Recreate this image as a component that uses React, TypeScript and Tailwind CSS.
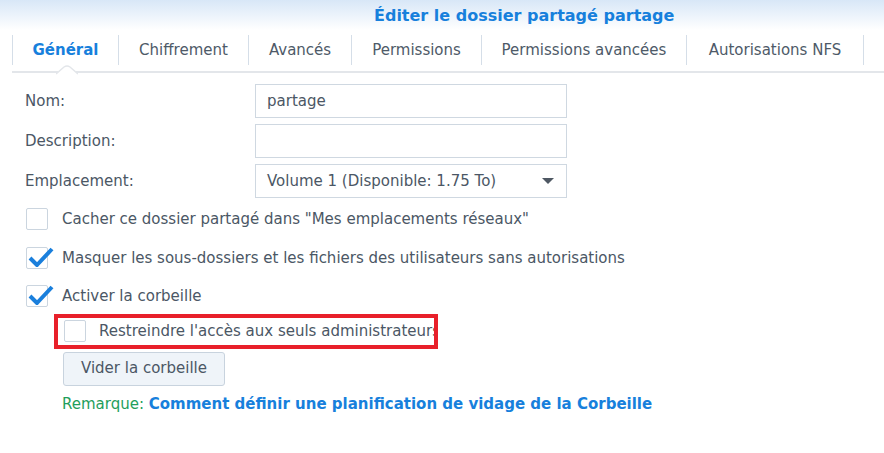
import React from 'react';

const tabs = [
  { label: 'Général', w: 'w-[106px]', active: true },
  { label: 'Chiffrement', w: 'w-[130px]' },
  { label: 'Avancés', w: 'w-[103px]' },
  { label: 'Permissions', w: 'w-[130px]' },
  { label: 'Permissions avancées', w: 'w-[205px]' },
  { label: 'Autorisations NFS', w: 'w-[177px]' },
];

const Check = ({ checked = false }: { checked?: boolean }) => (
  <div className="relative w-[22px] h-[22px] shrink-0 border border-[#cbd5df] bg-white rounded-[2px]">
    {checked && (
      <svg className="absolute left-[1px] top-[-3px]" width="26" height="24" viewBox="0 0 26 24">
        <path d="M2 13 L9 20 L24 4" fill="none" stroke="#1a7fdc" strokeWidth="4" strokeLinejoin="round" />
      </svg>
    )}
  </div>
);

const FieldRow = ({ label, children }: { label: string; children: React.ReactNode }) => (
  <div className="flex items-center h-[34px]">
    <div className="w-[255px] pl-[25px] text-[15px] text-[#4b5765]">{label}</div>
    <div className="w-[312px] h-[34px] border border-[#cfd8e1] bg-white flex items-center px-[11px] text-[15px] text-[#4b5765]">
      {children}
    </div>
  </div>
);

const TabBar = () => (
  <div className="relative ml-[12px] mt-[5px]">
    <div className="flex h-[30px] border-l border-[#d5dee8]">
      {tabs.map((t) => (
        <div
          key={t.label}
          className={`${t.w} border-r border-[#d5dee8] flex items-center justify-center text-[15px] ${
            t.active ? 'font-bold text-[#1780dc]' : 'text-[#4e5a68]'
          }`}
        >
          {t.label}
        </div>
      ))}
    </div>
    <div className="h-[8px] border-b-2 border-[#e3e6ea]" />
    {/* notch under the active tab */}
    <svg className="absolute left-[44px] top-[30px]" width="22" height="10" viewBox="0 0 22 10">
      <path d="M0 9 L8 2 Q11 0 14 2 L22 9" fill="white" stroke="#e3e6ea" strokeWidth="1.5" />
    </svg>
  </div>
);

const App = () => {
  return (
    <div className="w-[884px] h-[453px] bg-white overflow-hidden font-['DejaVu_Sans',Verdana,sans-serif]">
      <div className="h-[30px] bg-gradient-to-b from-[#d8e7f7] to-white flex items-center pl-[374px] pt-[1px]">
        <span className="text-[16px] font-bold text-[#1780dc]">Éditer le dossier partagé partage</span>
      </div>

      <TabBar />

      <div className="mt-[11px] flex flex-col gap-[6px]">
        <FieldRow label="Nom:">partage</FieldRow>
        <FieldRow label="Description:">{''}</FieldRow>
        <FieldRow label="Emplacement:">
          <span className="flex-1">Volume 1 (Disponible: 1.75 To)</span>
          <svg width="12" height="8" viewBox="0 0 12 8" className="mr-[1px]">
            <path d="M0 1 L12 1 L6 7 Z" fill="#4f5863" />
          </svg>
        </FieldRow>
      </div>

      <div className="pl-[26px] mt-[10px] flex flex-col gap-[16px] text-[15px] text-[#4b5765]">
        <div className="flex items-center gap-[14px]">
          <Check />
          <span>Cacher ce dossier partagé dans "Mes emplacements réseaux"</span>
        </div>
        <div className="flex items-center gap-[14px]">
          <Check checked />
          <span>Masquer les sous-dossiers et les fichiers des utilisateurs sans autorisations</span>
        </div>
        <div className="flex items-center gap-[14px]">
          <Check checked />
          <span>Activer la corbeille</span>
        </div>
      </div>

      {/* red highlight frame, text is clipped at its edge as in the original capture */}
      <div className="ml-[54px] mt-[6px] w-[384px] h-[35px] border-[4px] border-[#e8202a] overflow-hidden flex items-center pl-[6px] gap-[13px] text-[15px] text-[#4b5765] whitespace-nowrap">
        <Check />
        <span>Restreindre l'accès aux seuls administrateurs</span>
      </div>

      <div className="ml-[63px] mt-[3px] w-[162px] h-[34px] rounded-[3px] border border-[#c8d3de] bg-[#eff4f9] flex items-center justify-center text-[15px] text-[#4b5765]">
        Vider la corbeille
      </div>

      <div className="ml-[62px] mt-[7px] text-[15px]">
        <span className="text-[#1f9e5c]">Remarque: </span>
        <span className="font-bold text-[#1780dc]">Comment définir une planification de vidage de la Corbeille</span>
      </div>
    </div>
  );
};

export default App;
